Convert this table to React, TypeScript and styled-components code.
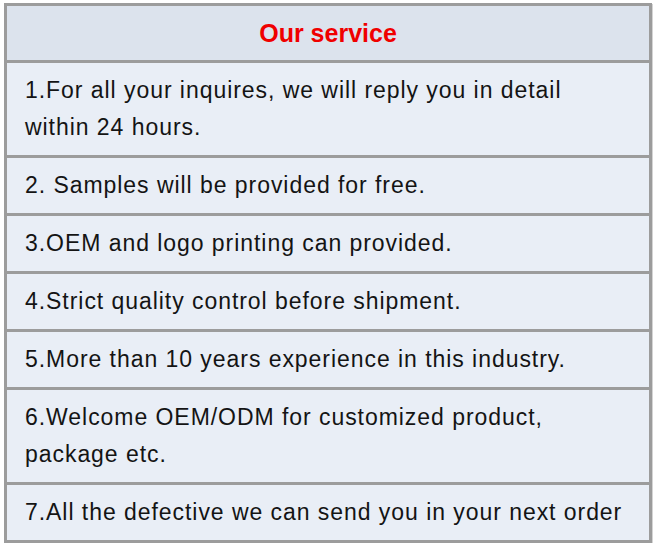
import styled, { createGlobalStyle } from "styled-components";

const Global = createGlobalStyle`
    body {
        margin: 0;
        background: #ffffff;
        font-family: "Liberation Sans", Arial, sans-serif;
    }
`;

const Page = styled.div`
    padding: 3px 0 0 4px;
`;

const Table = styled.div`
    width: 648px;
    box-sizing: border-box;
    border: 3px solid #9c9c9c;
    display: flex;
    flex-direction: column;
    box-shadow: 1px 1px 0 #d4d4d4;
`;

const Header = styled.div`
    height: 54px;
    background: #dce3ed;
    display: flex;
    align-items: center;
    justify-content: center;
    color: #f00000;
    font-size: 25px;
    font-weight: bold;
`;

const Row = styled.div`
    border-top: 3px solid #9c9c9c;
    background: #e9eef6;
    padding: 9px 12px 9px 18px;
    display: flex;
    flex-direction: column;
    justify-content: center;
    color: #141414;
    font-size: 23px;
    line-height: 37px;
    letter-spacing: 0.95px;
`;

const Line = styled.span`
    display: block;
    white-space: nowrap;
`;

const services = [
    ["1.For all your inquires, we will reply you in detail", "within 24 hours."],
    ["2. Samples will be provided for free."],
    ["3.OEM and logo printing can provided."],
    ["4.Strict quality control before shipment."],
    ["5.More than 10 years experience in this industry."],
    ["6.Welcome OEM/ODM for customized product,", "package etc."],
    ["7.All the defective we can send you in your next order"],
];

export default function App() {
    return (
        <Page>
            <Global />
            <Table>
                <Header>Our service</Header>
                {services.map((lines, i) => (
                    <Row key={i}>
                        {lines.map((l, j) => (
                            <Line key={j}>{l}</Line>
                        ))}
                    </Row>
                ))}
            </Table>
        </Page>
    );
}
